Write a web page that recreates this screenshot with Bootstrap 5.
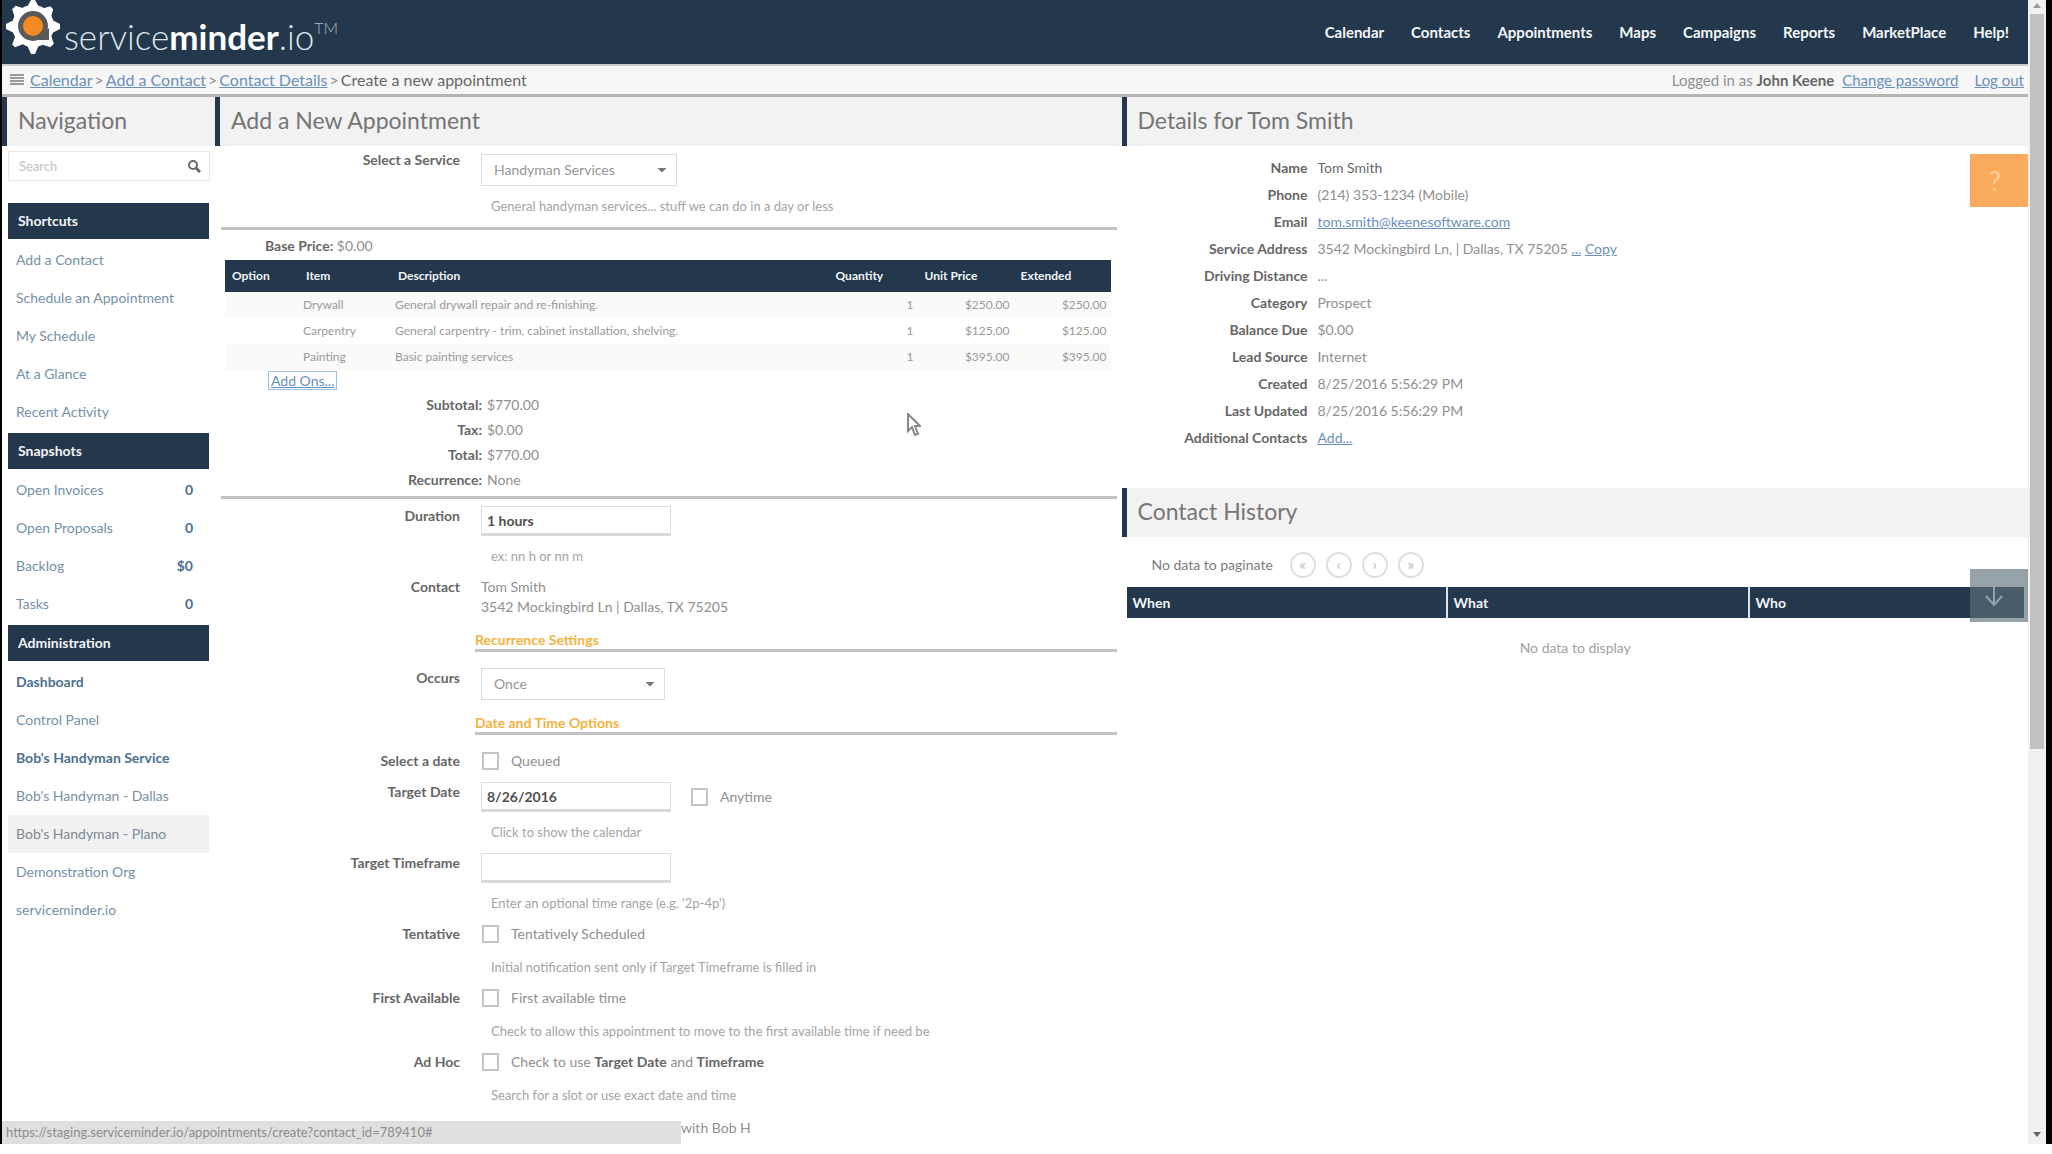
<!DOCTYPE html>
<html lang="en">
<head>
<meta charset="utf-8">
<meta name="viewport" content="width=device-width, initial-scale=1">
<title>serviceminder.io - Create a new appointment</title>
<link href="https://cdn.jsdelivr.net/npm/bootstrap@5.3.0/dist/css/bootstrap.min.css" rel="stylesheet">
<style>
:root{--navy:#23384c;--line:#c2c2c2;--soft:#f2f2f2;--txt:#8f8f8f;--lab:#666}
body{font-family:Lato,"Open Sans",sans-serif;font-size:14px;line-height:20px;color:var(--txt);background:#fff}
a{color:#6a90bb}
.screen{height:calc(100vh - 10px);border-left:2px solid #000;border-right:6px solid #000;overflow:hidden}
.pagebody{min-width:0}
.topbar{height:64px;background:var(--navy)}
.logo{color:#dfe6ec;font-size:35px;line-height:40px;font-weight:300}
.logo b{font-weight:700;color:#fff}
.logo sup{font-size:16px;top:-16px;color:#aab6c2}
.topbar .nav-link{color:#f4f7fa;font-weight:700;font-size:15px;padding:0}
.topbar .navbar-nav{gap:27px;padding-right:19px}
.crumbs{height:33px;background:#f6f6f6;border-top:2px solid #c9cccf;border-bottom:3px solid #b5b5b5;font-size:15px}
.trail{font-size:16px;gap:2px}
.dark-txt{color:var(--lab)}
.pane-title{height:49px;background:var(--soft);border-left:5px solid var(--navy);color:#757575;font-size:23px;line-height:47px;font-weight:400;margin:0;padding-left:11px}
.side{width:213px}
.searchbox{height:30px;border:1px solid #e6e6e6;margin:5px 5px 0 6px}
.searchbox input{border:0;font-size:13px;color:#999;width:100%;outline:0;background:none}
.searchbox input::placeholder{color:#c3c3c3}
.searchbox button{border:0;background:none;padding:0;line-height:0}
.side-head{height:36px;line-height:36px;background:var(--navy);color:#f2f5f8;font-weight:700;font-size:14px;margin:2px 0;padding-left:10px}
.side-list{margin:0 6px;padding-top:20px}
.side-list a{height:38px;line-height:38px;color:#7590a8;text-decoration:none;padding:0 16px 0 8px}
.side-list a.strong,.side-list a b{color:#4a7090;font-weight:700}
.side-list a.picked{background:#f1f1f2;color:#7b8896}
.rule{height:3px;background:var(--line);margin:11px 5px 0 6px}
.frow{display:flex;padding:11px 0 0 5px}
.frow.first{padding-top:4px}
.frow.wide{padding-top:16px}
.frow.dur{padding-top:7px}
.flabel{width:240px;flex:none;text-align:right;font-weight:700;color:var(--lab);margin-right:21px}
.pick{height:32px;border:1px solid #dcdcdc;color:#959595;background:#fff;padding:0 12px;display:block;font-size:14px;
 appearance:none;background-image:linear-gradient(45deg,transparent 50%,#777 50%),linear-gradient(-45deg,transparent 50%,#777 50%);
 background-size:4px 5px;background-position:right 14px center,right 10px center;background-repeat:no-repeat}
.pick.svc{width:196px}.pick.occ{width:184px}
.txtin{width:190px;height:30px;border:1px solid #dedede;border-bottom:3px solid #d9d9d9;padding:0 5px;color:#4f4f4f;font-size:14px;font-weight:700;display:block}
.hint{padding:10px 0 0 10px;color:#a4a4a4;font-size:13px}
.tick-row + .hint{padding-top:13px}
.tick{appearance:none;width:17px;height:18px;border:2px solid #c4c4c4;background:#fff;margin:0 12px 0 1px;flex:none}
.base{padding:6px 0 4px 50px}
.optwrap{margin:0 11px 0 10px}
.opts{border-collapse:collapse;width:100%;font-size:12px}
.opts th{background:var(--navy);color:#f2f5f8;height:32px;padding:0 0 0 7px}
.opts td{height:26px;padding:0 4px;color:#999}
.opts tbody tr:nth-child(odd) td{background:#fafafa}
.addons{border:1px solid #9fbfe3;height:19px;line-height:18px;margin:1px 0 0 53px;padding:0 2px}
.totals{line-height:25px;margin:2px 0 0}
.totals dt{width:272px;text-align:right;color:var(--lab);padding-right:5px;flex:none}
.totals dd{margin:0}
.sect{font-size:14px;line-height:19px;font-weight:700;color:#f6b13c;border-bottom:3px solid var(--line);margin:9px 5px 0 260px;padding-top:4px}
.facts{line-height:27px;margin:0 0 37px;padding-top:8px}
.facts dt{width:186px;margin-right:10px;text-align:right;color:var(--lab);flex:none}
.facts dd{margin:0}
.histwrap{padding:9px 4px 0 5px}
.hist{width:100%;border-collapse:collapse}
.hist th{background:var(--navy);color:#f2f5f8;height:31px;padding-left:6px;border-left:2px solid #dfe3e7}
.hist th:first-child{border-left:0}
.hist td{height:60px;text-align:center;color:#a0a0a0}
.pages{gap:10px;padding:15px 0 0 30px}
.pages span{color:#7c7c7c;font-size:14px;margin-right:7px}
.pager{width:26px;height:26px;border:2px solid #dedede;border-radius:50%;background:#fff;color:#bbb;font-size:16px;line-height:16px;padding:0 0 3px}
.float-btn{right:0;width:58px;height:53px;border:0;color:#ffd0a0;font-size:26px;background:#fbab5e;padding:0 8px 0 0}
.help-btn{top:154px}
.to-end{top:569px;background:rgba(92,112,122,.65);color:#93a4b0;padding:0 10px 4px 0}
.sbar{width:18px;background:#f1f1f1;flex:none}
.sbar .thumb{flex:0 0 735px;width:14px;background:#c1c1c1}
.statusline{left:2px;bottom:10px;width:679px;height:23px;background:#dfdfdf;color:#8c8c8c;font-size:13px;line-height:23px;padding-left:4px}
.lastrow{padding:13px 0 0 466px}
.pointer{left:692px;top:316px}
.col-flex{flex:1 1 0;min-width:0}
</style>
</head>
<body>
<div class="screen d-flex position-relative">
 <div class="pagebody flex-grow-1 position-relative">
  <header class="topbar d-flex align-items-center justify-content-between">
   <a href="#" class="d-flex align-items-start text-decoration-none h-100 ps-1">
    <svg width="54" height="54" viewBox="0 0 54 54" aria-hidden="true">
     <g fill="#fff"><circle cx="27" cy="26" r="21"/>
      <g id="t"><path d="M21 7 25 0h4l4 7zM21 45l4 9h4l4-9z"/><path d="M8 20 0 24v5l8 4zM46 20l8 4v5l-8 4z"/></g>
      <use href="#t" transform="rotate(45 27 26.500)"/></g>
     <circle cx="27" cy="26" r="15" fill="#5a5a58"/><path d="M30 40h13V28z" fill="#5a5a58"/>
     <circle cx="27" cy="26" r="10" fill="#f58a25"/></svg>
    <span class="logo ms-1 pt-3">service<b>minder</b>.io<sup>TM</sup></span>
   </a>
   <nav aria-label="Main"><ul class="navbar-nav flex-row">
    <li><a class="nav-link" href="#">Calendar</a></li><li><a class="nav-link" href="#">Contacts</a></li><li><a class="nav-link" href="#">Appointments</a></li><li><a class="nav-link" href="#">Maps</a></li><li><a class="nav-link" href="#">Campaigns</a></li><li><a class="nav-link" href="#">Reports</a></li><li><a class="nav-link" href="#">MarketPlace</a></li><li><a class="nav-link" href="#">Help!</a></li>
   </ul></nav>
  </header>
  <div class="crumbs d-flex align-items-center justify-content-between">
   <div class="trail d-flex align-items-center ps-2">
    <svg width="14" height="12" viewBox="0 0 14 12" class="me-1" aria-hidden="true"><path d="M0 1h14M0 4h14M0 7h14M0 10h14" stroke="#999" stroke-width="2"/></svg>
    <a href="#">Calendar</a><span>&gt;</span><a href="#">Add a Contact</a><span>&gt;</span><a href="#">Contact Details</a><span>&gt;</span><span class="dark-txt">Create a new appointment</span>
   </div>
   <div class="d-flex pe-1"><span class="me-2">Logged in as <b class="dark-txt">John Keene</b></span><a class="me-3" href="#">Change password</a><a href="#">Log out</a></div>
  </div>
  <div class="d-flex">
   <aside class="side flex-shrink-0">
    <h2 class="pane-title">Navigation</h2>
    <form class="searchbox d-flex align-items-center px-2"><input type="text" placeholder="Search" aria-label="Search"><button type="button" aria-label="Search"><svg width="14" height="14" viewBox="0 0 14 14"><circle cx="6" cy="6" r="4" fill="none" stroke="#666" stroke-width="2"/><path d="m9 9 4 4" stroke="#666" stroke-width="3"/></svg></button></form>
    <nav class="side-list" aria-label="Side">
     <h3 class="side-head">Shortcuts</h3>
     <a class="d-block" href="#">Add a Contact</a><a class="d-block" href="#">Schedule an Appointment</a><a class="d-block" href="#">My Schedule</a><a class="d-block" href="#">At a Glance</a><a class="d-block" href="#">Recent Activity</a>
     <h3 class="side-head">Snapshots</h3>
     <a class="d-flex justify-content-between" href="#">Open Invoices <b>0</b></a><a class="d-flex justify-content-between" href="#">Open Proposals <b>0</b></a><a class="d-flex justify-content-between" href="#">Backlog <b>$0</b></a><a class="d-flex justify-content-between" href="#">Tasks <b>0</b></a>
     <h3 class="side-head">Administration</h3>
     <a class="d-block strong" href="#">Dashboard</a><a class="d-block" href="#">Control Panel</a><a class="d-block strong" href="#">Bob's Handyman Service</a><a class="d-block" href="#">Bob's Handyman - Dallas</a><a class="d-block picked" href="#">Bob's Handyman - Plano</a><a class="d-block" href="#">Demonstration Org</a><a class="d-block" href="#">serviceminder.io</a>
    </nav>
   </aside>
   <main class="col-flex position-relative">
    <h1 class="pane-title">Add a New Appointment</h1>
    <div class="frow first"><label class="flabel" for="svc">Select a Service</label>
     <div class="pt-1"><select class="pick svc" id="svc"><option>Handyman Services</option></select>
      <div class="hint">General handyman services... stuff we can do in a day or less</div></div></div>
    <div class="rule"></div>
    <div class="base"><b class="dark-txt">Base Price:</b> $0.00</div>
    <div class="optwrap">
     <table class="opts"><colgroup><col style="width:74px"><col style="width:92px"><col><col style="width:89px"><col style="width:96px"><col style="width:97px"></colgroup>
      <thead><tr><th>Option</th><th>Item</th><th>Description</th><th>Quantity</th><th>Unit Price</th><th>Extended</th></tr></thead>
      <tbody>
       <tr><td></td><td>Drywall</td><td>General drywall repair and re-finishing.</td><td class="text-end">1</td><td class="text-end">$250.00</td><td class="text-end">$250.00</td></tr>
       <tr><td></td><td>Carpentry</td><td>General carpentry - trim, cabinet installation, shelving.</td><td class="text-end">1</td><td class="text-end">$125.00</td><td class="text-end">$125.00</td></tr>
       <tr><td></td><td>Painting</td><td>Basic painting services</td><td class="text-end">1</td><td class="text-end">$395.00</td><td class="text-end">$395.00</td></tr>
      </tbody></table></div>
    <div class="d-flex"><a class="addons" href="#">Add Ons...</a></div>
    <dl class="totals">
     <div class="d-flex"><dt>Subtotal:</dt><dd>$770.00</dd></div><div class="d-flex"><dt>Tax:</dt><dd>$0.00</dd></div><div class="d-flex"><dt>Total:</dt><dd>$770.00</dd></div><div class="d-flex"><dt>Recurrence:</dt><dd>None</dd></div></dl>
    <div class="rule mt-1"></div>
    <div class="frow dur"><label class="flabel" for="dur">Duration</label><div><input class="txtin" id="dur" type="text" value="1 hours"><div class="hint">ex: nn h or nn m</div></div></div>
    <div class="frow"><div class="flabel">Contact</div><div>Tom Smith<br>3542 Mockingbird Ln | Dallas, TX 75205</div></div>
    <h3 class="sect">Recurrence Settings</h3>
    <div class="frow wide"><label class="flabel" for="occ">Occurs</label><div><select class="pick occ" id="occ"><option>Once</option></select></div></div>
    <h3 class="sect">Date and Time Options</h3>
    <div class="frow wide"><div class="flabel">Select a date</div><div class="tick-row d-flex align-items-center"><input class="tick" type="checkbox" id="q"><label for="q">Queued</label></div></div>
    <div class="frow"><label class="flabel" for="td">Target Date</label><div><div class="d-flex align-items-center"><input class="txtin me-3" id="td" type="text" value="8/26/2016"><input class="tick ms-1" type="checkbox" id="any"><label for="any">Anytime</label></div><div class="hint">Click to show the calendar</div></div></div>
    <div class="frow"><label class="flabel" for="tt">Target Timeframe</label><div><input class="txtin" id="tt" type="text"><div class="hint">Enter an optional time range (e.g. '2p-4p')</div></div></div>
    <div class="frow"><div class="flabel">Tentative</div><div><div class="tick-row d-flex align-items-center"><input class="tick" type="checkbox" id="ten"><label for="ten">Tentatively Scheduled</label></div><div class="hint">Initial notification sent only if Target Timeframe is filled in</div></div></div>
    <div class="frow"><div class="flabel">First Available</div><div><div class="tick-row d-flex align-items-center"><input class="tick" type="checkbox" id="fa"><label for="fa">First available time</label></div><div class="hint">Check to allow this appointment to move to the first available time if need be</div></div></div>
    <div class="frow"><div class="flabel">Ad Hoc</div><div><div class="tick-row d-flex align-items-center"><input class="tick" type="checkbox" id="ah"><label for="ah">Check to use <b class="dark-txt">Target Date</b> and <b class="dark-txt">Timeframe</b></label></div><div class="hint">Search for a slot or use exact date and time</div></div></div>
    <div class="lastrow">with Bob H</div>
    <svg class="pointer position-absolute" width="14" height="24" viewBox="0 0 14 24" aria-hidden="true"><path d="M1 1v17l4-4 3 8 3-1-3-8h5z" fill="#fff" stroke="#888" stroke-width="2"/></svg>
   </main>
   <section class="col-flex">
    <h2 class="pane-title">Details for Tom Smith</h2>
    <dl class="facts">
     <div class="d-flex"><dt>Name</dt><dd class="dark-txt">Tom Smith</dd></div>
     <div class="d-flex"><dt>Phone</dt><dd>(214) 353-1234 (Mobile)</dd></div>
     <div class="d-flex"><dt>Email</dt><dd><a href="#">tom.smith@keenesoftware.com</a></dd></div>
     <div class="d-flex"><dt>Service Address</dt><dd>3542 Mockingbird Ln, | Dallas, TX 75205 <a href="#">...</a> <a href="#">Copy</a></dd></div>
     <div class="d-flex"><dt>Driving Distance</dt><dd>...</dd></div>
     <div class="d-flex"><dt>Category</dt><dd>Prospect</dd></div>
     <div class="d-flex"><dt>Balance Due</dt><dd>$0.00</dd></div>
     <div class="d-flex"><dt>Lead Source</dt><dd>Internet</dd></div>
     <div class="d-flex"><dt>Created</dt><dd>8/25/2016 5:56:29 PM</dd></div>
     <div class="d-flex"><dt>Last Updated</dt><dd>8/25/2016 5:56:29 PM</dd></div>
     <div class="d-flex"><dt>Additional Contacts</dt><dd><a href="#">Add...</a></dd></div>
    </dl>
    <h2 class="pane-title">Contact History</h2>
    <div class="pages d-flex align-items-center"><span>No data to paginate</span><button class="pager">«</button><button class="pager">‹</button><button class="pager">›</button><button class="pager">»</button></div>
    <div class="histwrap"><table class="hist"><colgroup><col style="width:320px"><col style="width:302px"><col></colgroup><thead><tr><th>When</th><th>What</th><th>Who</th></tr></thead><tbody><tr><td colspan="3">No data to display</td></tr></tbody></table></div>
   </section>
  </div>
  <button class="float-btn help-btn position-absolute" aria-label="Help">?</button>
  <button class="float-btn to-end position-absolute" aria-label="Scroll down"><svg width="20" height="26" viewBox="0 0 20 26"><path d="M10 1v23M2 15l8 9 8-9" fill="none" stroke="currentColor" stroke-width="2"/></svg></button>
 </div>
 <div class="sbar d-flex flex-column align-items-center justify-content-between" aria-hidden="true">
  <svg width="8" height="14" viewBox="0 0 8 14"><path d="m0 8 4-5 4 5z" fill="#999"/></svg><div class="thumb"></div><div class="flex-grow-1"></div>
  <svg width="8" height="16" viewBox="0 0 8 16"><path d="m0 4 4 5 4-5z" fill="#666"/></svg>
 </div>
</div>
<div class="statusline position-fixed">https://staging.serviceminder.io/appointments/create?contact_id=789410#</div>
<script src="https://cdn.jsdelivr.net/npm/bootstrap@5.3.0/dist/js/bootstrap.bundle.min.js"></script>
</body>
</html>
